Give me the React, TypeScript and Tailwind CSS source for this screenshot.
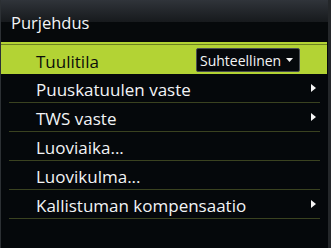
import React from 'react';

const rows = [
  { label: 'Puuskatuulen vaste', arrow: true },
  { label: 'TWS vaste', arrow: true },
  { label: 'Luoviaika...', arrow: false },
  { label: 'Luovikulma...', arrow: false },
  { label: 'Kallistuman kompensaatio', arrow: true },
];

function ArrowRight() {
  return (
    <svg width="5" height="8" viewBox="0 0 5 8" className="block">
      <path d="M0 0 L5 4 L0 8 Z" fill="#f4f4f4" />
    </svg>
  );
}

export default function App() {
  return (
    <div
      className="w-[331px] h-[248px] flex bg-[#05080b] overflow-hidden"
      style={{ fontFamily: '"Open Sans", "Noto Sans", sans-serif' }}
    >
      <div className="w-px bg-[#2c3034]" />
      <div className="flex-1 flex flex-col">
        {/* Header */}
        <div className="h-[42px] relative bg-[#06090b]">
          <div className="h-[22px] bg-gradient-to-b from-[#30343a] to-[#171a1d]" />
          <div className="absolute left-[10px] top-[11px] text-[16.5px] leading-[24px] text-[#f2f4f6]">
            Purjehdus
          </div>
        </div>

        {/* Selected row */}
        <div className="h-[2px] bg-[#b3d334] mr-[1px]" />
        <div className="h-px bg-[#6f8220] mr-[1px]" />
        <div className="h-[29px] bg-[#b3d334] mr-[1px] flex items-center pl-[35px] pr-[27px]">
          <span className="flex-1 text-[17px] leading-[29px] pt-[3px] text-[#0b0e0a]">Tuulitila</span>
          <div className="w-[104px] h-[24px] mt-[1px] bg-[#05080b] border border-[#4a4e52] rounded-[2px] flex items-center pl-[3px] pr-[6px]">
            <span className="flex-1 text-[14px] leading-[22px] pt-[1px] text-[#f4f5f6]">Suhteellinen</span>
            <svg width="7" height="4" viewBox="0 0 7 4" className="block">
              <path d="M0 0 L7 0 L3.5 4 Z" fill="#f4f4f4" />
            </svg>
          </div>
        </div>

        {/* Other rows */}
        <div className="flex flex-col px-[8px]">
          {rows.map((r) => (
            <div
              key={r.label}
              className="h-[29px] border-b border-[#3a4220] flex items-center pl-[27px] pr-[4px]"
            >
              <span className="flex-1 text-[17px] leading-[28px] pt-[3px] text-[#f2f4f6]">{r.label}</span>
              {r.arrow && <ArrowRight />}
            </div>
          ))}
        </div>
      </div>
      <div className="w-[3px] bg-[#24272a]" />
    </div>
  );
}
